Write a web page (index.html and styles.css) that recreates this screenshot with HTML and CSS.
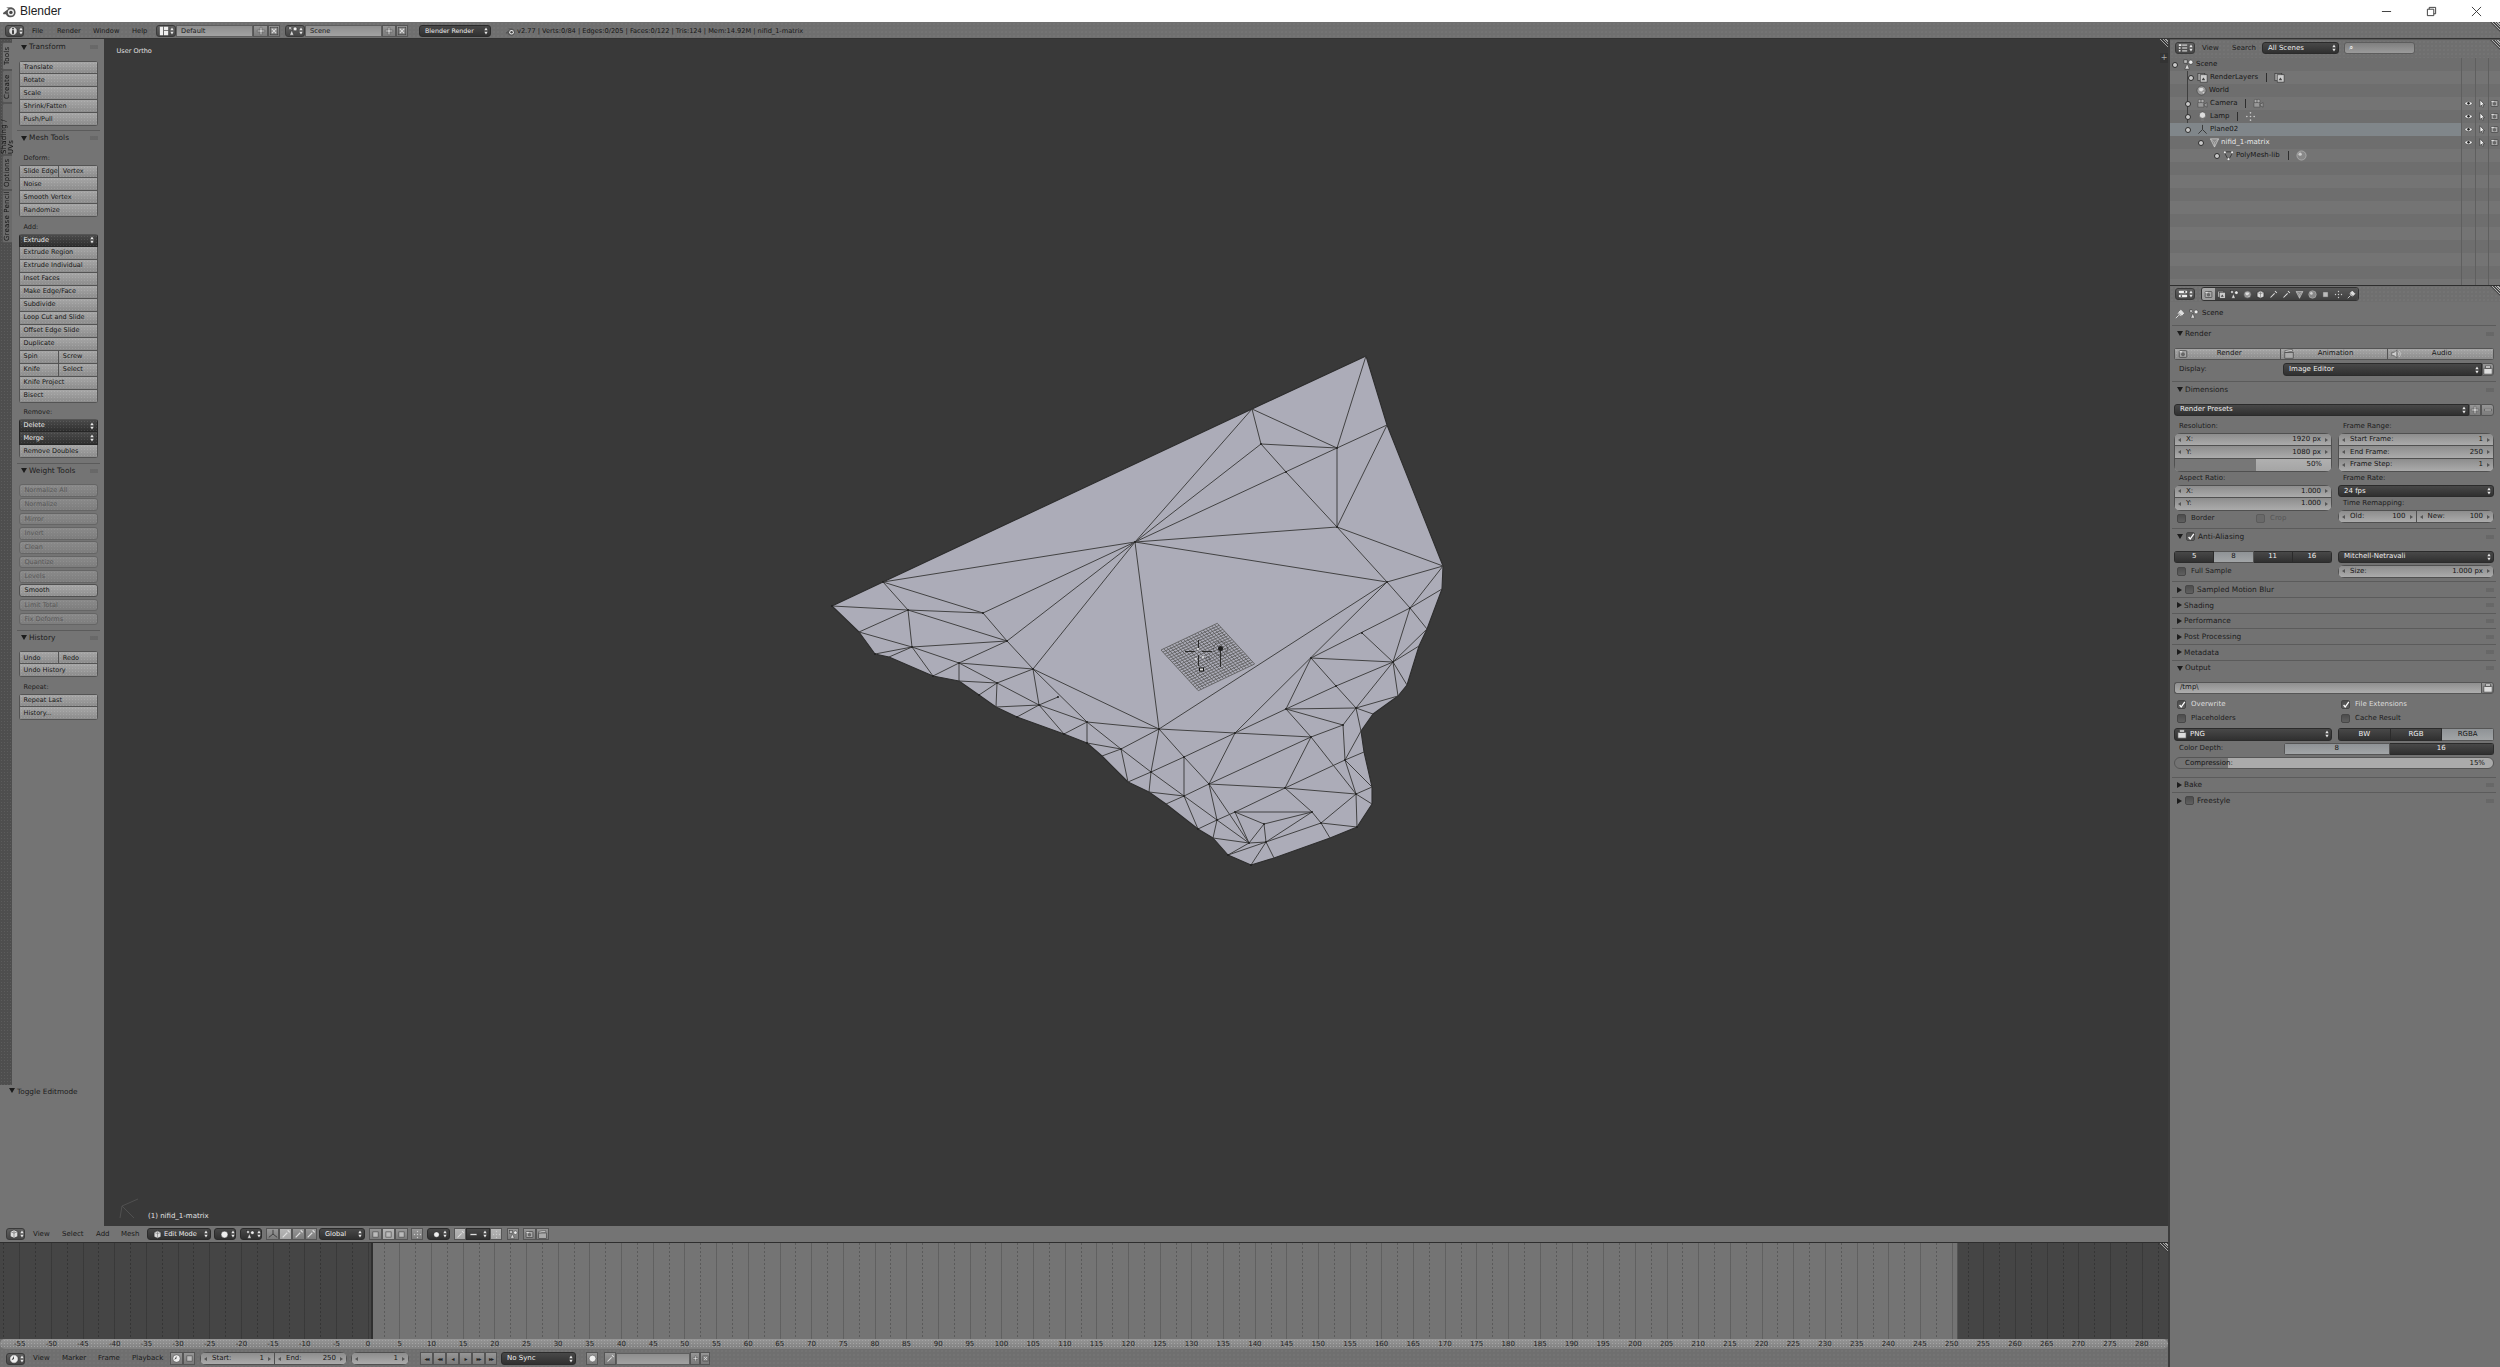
FILE: index.html
```html
<!DOCTYPE html>
<html lang="en">
<head>
<meta charset="utf-8">
<title>Blender</title>
<link rel="stylesheet" href="styles.css">
</head>
<body>
<svg class="defs" width="0" height="0">
  <symbol id="ud" viewBox="0 0 5 10"><path d="M2.5 0.5 4.6 4H.4zM2.5 9.5 .4 6h4.2z"/></symbol>
  <symbol id="logo" viewBox="0 0 16 16"><path d="M1 9.5 7 5 4.5 3.7 10 3.5c3 .6 4.8 3 4.5 6-.4 3-3 5-6 4.7-2.300-.2-3.800-1.600-4.300-3.200L1.500 11z" fill="#555"/><circle cx="9.500" cy="9" r="3.300" fill="#eee"/><circle cx="9.500" cy="9" r="1.800" fill="#444"/></symbol>
  <symbol id="cube" viewBox="0 0 12 12"><path d="M6 1 10.500 3v6L6 11 1.500 9V3z" fill="#ddd" stroke="#222" stroke-width=".7"/><path d="M6 1v10" stroke="#888" fill="none"/><path d="M1.500 3 6 5l4.500-2" stroke="#555" fill="none" stroke-width=".6"/></symbol>
  <symbol id="info" viewBox="0 0 12 12"><circle cx="6" cy="6" r="5" fill="#ddd" stroke="#222" stroke-width=".7"/><rect x="5" y="5" width="2" height="4.500" fill="#222"/><rect x="5" y="2.500" width="2" height="1.500" fill="#222"/></symbol>
  <symbol id="layout" viewBox="0 0 12 12"><path d="M1 1h4v10H1zM6 1h5v4H6zM6 6h5v5H6z" fill="#eee"/></symbol>
  <symbol id="scene" viewBox="0 0 12 12"><path d="M2 11 4.500 5 7 11z" fill="#ddd" stroke="#222" stroke-width=".5"/><circle cx="8.500" cy="3.500" r="2.300" fill="#eee" stroke="#222" stroke-width=".5"/><rect x="1" y="1" width="3.500" height="3.500" fill="#bbb" stroke="#222" stroke-width=".5"/></symbol>
  <symbol id="list" viewBox="0 0 12 12"><path d="M1 1.500h3v2H1zM1 5h2v1.800H1zM1 8.500h2v1.800H1z" fill="#eee"/><path d="M5 2.500h6M5 6h6M5 9.500h6" stroke="#eee" stroke-width="1.200"/></symbol>
  <symbol id="props" viewBox="0 0 12 12"><rect x="1" y="2" width="10" height="3" rx="1" fill="#eee"/><rect x="1" y="7" width="10" height="3" rx="1" fill="#eee"/><circle cx="8" cy="3.500" r="1" fill="#333"/><circle cx="4" cy="8.500" r="1" fill="#333"/></symbol>
  <symbol id="clock" viewBox="0 0 12 12"><circle cx="6" cy="6" r="5" fill="#eee" stroke="#222" stroke-width=".6"/><path d="M6 2.500V6L3 7.500z" fill="#444"/></symbol>
  <symbol id="eye" viewBox="0 0 12 12"><path d="M1 6c2.500-3.500 7.500-3.500 10 0-2.500 3.500-7.500 3.500-10 0z" fill="#eee" stroke="#333" stroke-width=".6"/><circle cx="6" cy="5.800" r="1.700" fill="#222"/></symbol>
  <symbol id="cur" viewBox="0 0 12 12"><path d="M4 1v9l2-2 1.500 3 1.300-.7L7.500 7.500H10z" fill="#eee" stroke="#222" stroke-width=".7"/></symbol>
  <symbol id="cam" viewBox="0 0 12 12"><rect x="1.500" y="2" width="9" height="8" rx="1" fill="#aaa" stroke="#333" stroke-width=".8"/><circle cx="6" cy="6.300" r="2.300" fill="#666"/><rect x="2" y="2.500" width="3" height="1.500" fill="#ddd"/></symbol>
  <symbol id="world" viewBox="0 0 12 12"><circle cx="6" cy="6" r="5" fill="#999" stroke="#444" stroke-width=".7"/><path d="M3 4c2-1.500 3 0 4-1l1.500 2L6 7 4 6.500zM7 8l2-.5-1 2z" fill="#ddd"/></symbol>
  <symbol id="rl" viewBox="0 0 12 12"><rect x="1" y="1.500" width="7.500" height="8" fill="#aaa" stroke="#333" stroke-width=".7"/><rect x="3.500" y="3" width="7.500" height="8" fill="#ccc" stroke="#333" stroke-width=".7"/><path d="M5 9l2-3 2 3z" fill="#444"/></symbol>
  <symbol id="camo" viewBox="0 0 12 12"><path d="M1 5h6.500v5H1zM7.500 7 11 5v5L7.500 8z" fill="#999" stroke="#444" stroke-width=".6"/><circle cx="3" cy="3.300" r="1.800" fill="#aaa" stroke="#444" stroke-width=".5"/><circle cx="6" cy="3.300" r="1.800" fill="#aaa" stroke="#444" stroke-width=".5"/></symbol>
  <symbol id="lamp" viewBox="0 0 12 12"><circle cx="6" cy="4.500" r="3.500" fill="#ddd" stroke="#444" stroke-width=".6"/><path d="M4.500 8h3v3h-3z" fill="#777"/></symbol>
  <symbol id="empty" viewBox="0 0 12 12"><path d="M6 6V1M6 6 1.500 10.500M6 6l4.500 4.500" stroke="#333" stroke-width="1" fill="none"/></symbol>
  <symbol id="tri" viewBox="0 0 12 12"><path d="M1.500 2h9L6 11z" fill="#8a8a8a" stroke="#ddd" stroke-width=".7"/><path d="M1.500 2 6 6l4.500-4M6 6v5" stroke="#ccc" stroke-width=".5" fill="none"/></symbol>
  <symbol id="poly" viewBox="0 0 12 12"><path d="M1 2h10L6 11z" fill="#777" stroke="#222" stroke-width=".7"/><circle cx="2" cy="2.500" r="1.200" fill="#eee"/><circle cx="10" cy="2.500" r="1.200" fill="#eee"/><circle cx="6" cy="10" r="1.200" fill="#eee"/></symbol>
  <symbol id="ball" viewBox="0 0 12 12"><circle cx="6" cy="6" r="5" fill="#888" stroke="#bbb" stroke-width=".7"/><circle cx="4.500" cy="4.500" r="1.800" fill="#ccc"/></symbol>
  <symbol id="dots" viewBox="0 0 12 12"><g fill="#ccc"><circle cx="6" cy="2" r=".9"/><circle cx="2" cy="6" r=".9"/><circle cx="10" cy="6" r=".9"/><circle cx="6" cy="10" r=".9"/><circle cx="6" cy="6" r=".9"/></g></symbol>
  <symbol id="pin" viewBox="0 0 12 12"><path d="M1 11 4.500 7.500M3.500 5 7 8.500M4.500 4 8 7.500 10.500 5 7 1.500z" stroke="#eee" fill="#ddd" stroke-width="1"/></symbol>
  <symbol id="folder" viewBox="0 0 12 12"><path d="M1 4h10v7H1zM3 1h6v3H3z" fill="#ddd" stroke="#333" stroke-width=".7"/></symbol>
  <symbol id="plus" viewBox="0 0 12 12"><path d="M5 1.500h2V5h3.500v2H7v3.500H5V7H1.500V5H5z" fill="#ddd" stroke="#444" stroke-width=".6"/></symbol>
  <symbol id="minus" viewBox="0 0 12 12"><rect x="1.500" y="5" width="9" height="2" fill="#ddd" stroke="#444" stroke-width=".6"/></symbol>
  <symbol id="x" viewBox="0 0 12 12"><rect x="1.500" y="1.500" width="9" height="9" fill="none" stroke="#444" stroke-width=".8"/><path d="M3.500 3.500l5 5M8.500 3.500l-5 5" stroke="#ddd" stroke-width="1.300"/></symbol>
  <symbol id="check" viewBox="0 0 10 10"><path d="M2 5l2 2.500L8.500 1" stroke="#fff" stroke-width="1.600" fill="none"/></symbol>
  <symbol id="anim" viewBox="0 0 12 12"><rect x="1" y="4" width="10" height="7" fill="#aaa" stroke="#333" stroke-width=".7"/><path d="M1 2l9-1.500.4 2-9 1.500z" fill="#ddd" stroke="#333" stroke-width=".6"/></symbol>
  <symbol id="audio" viewBox="0 0 12 12"><path d="M1 4h3l3-3v10L4 8H1z" fill="#ccc" stroke="#333" stroke-width=".6"/><path d="M8.500 4c1 1.300 1 2.700 0 4M10 2.500c1.600 2.300 1.600 4.700 0 7" stroke="#ddd" fill="none" stroke-width=".8"/></symbol>
  <symbol id="sq" viewBox="0 0 12 12"><rect x="2.500" y="2.500" width="7" height="7" fill="#bbb" stroke="#444" stroke-width=".8"/></symbol>
  <symbol id="sph" viewBox="0 0 12 12"><circle cx="6" cy="6" r="4.500" fill="#eee" stroke="#222" stroke-width=".5"/></symbol>
  <symbol id="tool" viewBox="0 0 12 12"><path d="M2 10 7.500 4.500M8 1.500 10.500 4" stroke="#ddd" stroke-width="1.400" fill="none"/></symbol>
  <symbol id="vert" viewBox="0 0 12 12"><path d="M6 6V1M6 6 1 10M6 6l5 4" stroke="#333" stroke-width="1" fill="none"/></symbol>
</svg>

<header class="titlebar">
  <svg class="tlogo"><use href="#logo"/></svg>
  <span class="ttext">Blender</span>
  <div class="winctl">
    <svg class="wc" viewBox="0 0 12 12"><path d="M1 6h10" stroke="#333"/></svg>
    <svg class="wc" viewBox="0 0 12 12"><path d="M1.500 3.500h7v7h-7zM3.500 3.500v-2h7v7h-2" fill="none" stroke="#333"/></svg>
    <svg class="wc" viewBox="0 0 12 12"><path d="M1 1l10 10M11 1 1 11" stroke="#333"/></svg>
  </div>
</header>

<div class="hdr infobar">
  <div class="hb w19 ml5"><svg class="i10"><use href="#info"/></svg><svg class="ud"><use href="#ud"/></svg></div>
  <span class="menu w25 ml8">File</span><span class="menu w36">Render</span><span class="menu w39">Window</span><span class="menu w24">Help</span>
  <div class="hb w20"><svg class="i10"><use href="#layout"/></svg><svg class="ud"><use href="#ud"/></svg></div>
  <div class="text-field w77">Default</div>
  <div class="tb w15"><svg class="i10"><use href="#plus"/></svg></div><div class="tb w12"><svg class="i10"><use href="#x"/></svg></div>
  <div class="hb w20 ml5"><svg class="i10"><use href="#scene"/></svg><svg class="ud"><use href="#ud"/></svg></div>
  <div class="text-field w77">Scene</div>
  <div class="tb w14"><svg class="i10"><use href="#plus"/></svg></div><div class="tb w12"><svg class="i10"><use href="#x"/></svg></div>
  <div class="dd w72 ml11">Blender Render<svg class="ud"><use href="#ud"/></svg></div>
  <svg class="i11 ml14"><use href="#logo"/></svg>
  <span class="stats">v2.77 | Verts:0/84 | Edges:0/205 | Faces:0/122 | Tris:124 | Mem:14.92M | nifid_1-matrix</span>
  <i class="corner corner-tr"></i>
</div>

<div class="workspace">
  <div class="leftcol">
    <div class="viewarea">
      <aside class="toolregion">
        <div class="toolupper">
          <nav class="tabs">
            <span class="tab tab-on tab-tools">Tools</span>
            <span class="tab tab-create">Create</span>
            <span class="tab tab-shade">Shading / UVs</span>
            <span class="tab tab-opt">Options</span>
            <span class="tab tab-gp">Grease Pencil</span>
          </nav>
          <div class="shelf">
            <section class="tpanel tp1">
              <div class="phead"><i class="tdown"></i>Transform<i class="grip"></i></div>
              <div class="grp">
                <div class="btn">Translate</div><div class="btn">Rotate</div><div class="btn">Scale</div><div class="btn">Shrink/Fatten</div><div class="btn">Push/Pull</div>
              </div>
            </section>
            <section class="tpanel tp2">
              <div class="phead"><i class="tdown"></i>Mesh Tools<i class="grip"></i></div>
              <div class="lbl">Deform:</div>
              <div class="grp">
                <div class="hsplit"><div class="btn">Slide Edge</div><div class="btn">Vertex</div></div>
                <div class="btn">Noise</div><div class="btn">Smooth Vertex</div><div class="btn">Randomize</div>
              </div>
              <div class="lbl lbl-sp">Add:</div>
              <div class="grp">
                <div class="btn dark">Extrude<svg class="ud"><use href="#ud"/></svg></div>
                <div class="btn">Extrude Region</div><div class="btn">Extrude Individual</div><div class="btn">Inset Faces</div><div class="btn">Make Edge/Face</div><div class="btn">Subdivide</div><div class="btn">Loop Cut and Slide</div><div class="btn">Offset Edge Slide</div><div class="btn">Duplicate</div>
                <div class="hsplit"><div class="btn">Spin</div><div class="btn">Screw</div></div>
                <div class="hsplit"><div class="btn">Knife</div><div class="btn">Select</div></div>
                <div class="btn">Knife Project</div><div class="btn">Bisect</div>
              </div>
              <div class="lbl lbl-sp">Remove:</div>
              <div class="grp">
                <div class="btn dark">Delete<svg class="ud"><use href="#ud"/></svg></div>
                <div class="btn dark">Merge<svg class="ud"><use href="#ud"/></svg></div>
                <div class="btn">Remove Doubles</div>
              </div>
            </section>
            <section class="tpanel tp3">
              <div class="phead"><i class="tdown"></i>Weight Tools<i class="grip"></i></div>
              <div class="weights">
                <div class="wbtn off">Normalize All</div><div class="wbtn off">Normalize</div><div class="wbtn off">Mirror</div><div class="wbtn off">Invert</div><div class="wbtn off">Clean</div><div class="wbtn off">Quantize</div><div class="wbtn off">Levels</div><div class="wbtn">Smooth</div><div class="wbtn off">Limit Total</div><div class="wbtn off">Fix Deforms</div>
              </div>
            </section>
            <section class="tpanel tp4">
              <div class="phead"><i class="tdown"></i>History<i class="grip"></i></div>
              <div class="grp">
                <div class="hsplit"><div class="btn">Undo</div><div class="btn">Redo</div></div>
                <div class="btn">Undo History</div>
              </div>
              <div class="lbl lbl-sp">Repeat:</div>
              <div class="grp">
                <div class="btn">Repeat Last</div><div class="btn">History...</div>
              </div>
            </section>
          </div>
        </div>
        <div class="oppanel"><i class="tdown"></i>Toggle Editmode</div>
      </aside>
      <main class="viewport">
        <span class="vp-top">User Ortho</span>
        <span class="vp-bottom">(1) nifid_1-matrix</span>
        <span class="vp-plus">+</span>
        <svg class="meshcanvas" viewBox="104 39 2064 1187" aria-hidden="true">
          <path class="axes" d="M120 1218 122 1206 138 1199M122 1206 134 1218"/>
          <path class="face" d="M1366 356 1387 425 1443 566 1442 589 1427 629 1419 646 1407 685 1398 696 1373 714 1361 731 1364 752 1372 787 1372 804 1357 827 1330 838 1274 858 1251 865 1228 855 1213 838 1198 829 1166 804 1149 792 1128 782 1102 756 1087 743 1064 734 1017 717 996 707 979 695 959 681 933 676 889 657 875 654 859 632 832 606 883 582 1252 409z"/>
          <path class="grid" d="M1161 650l37.3 40.7m2.815-1.335l-37.3-40.7m2.815-1.335l37.3 40.7m2.815-1.335l-37.3-40.7m2.815-1.335l37.3 40.7m2.815-1.335l-37.3-40.7m2.815-1.335l37.3 40.7m2.815-1.335l-37.3-40.7m2.815-1.335l37.3 40.7m2.815-1.335l-37.3-40.7m2.815-1.335l37.3 40.7m2.815-1.335l-37.3-40.7m2.815-1.335l37.3 40.7m2.815-1.335l-37.3-40.7m2.815-1.335l37.3 40.7m2.815-1.335l-37.3-40.7m2.815-1.335l37.3 40.7m2.815-1.335l-37.3-40.7m2.815-1.335l37.3 40.7m2.815-1.335l-37.3-40.7m2.815-1.335l37.3 40.7M1161 650l56.3-26.7m1.865 2.035l-56.3 26.7m1.865 2.035l56.3-26.7m1.865 2.035l-56.3 26.7m1.865 2.035l56.3-26.7m1.865 2.035l-56.3 26.7m1.865 2.035l56.3-26.7m1.865 2.035l-56.3 26.7m1.865 2.035l56.3-26.7m1.865 2.035l-56.3 26.7m1.865 2.035l56.3-26.7m1.865 2.035l-56.3 26.7m1.865 2.035l56.3-26.7m1.865 2.035l-56.3 26.7m1.865 2.035l56.3-26.7m1.865 2.035l-56.3 26.7m1.865 2.035l56.3-26.7m1.865 2.035l-56.3 26.7m1.865 2.035l56.3-26.7m1.865 2.035l-56.3 26.7m1.865 2.035l56.3-26.7"/>
          <path class="edges" d="M1366 356 1337 448M1387 425 1337 448M1387 425 1337 527M1337 448 1337 527M1252 409 1337 448M1252 409 1261 444M1261 444 1337 448M1261 444 1286 472 1337 527M1337 448 1135 542M1261 444 1135 542M1252 409 1135 542M1337 527 1135 542M1337 527 1443 566M1337 527 1387 582M1135 542 1387 582M1387 582 1443 566M1387 582 1410 608M1410 608 1443 566M1410 608 1442 589M1410 608 1427 629M1410 608 1393 662
          M883 582 1135 542M883 582 983 613M883 582 908 610M832 606 908 610M908 610 983 613M983 613 1135 542M983 613 1007 641M1007 641 1135 542M1007 641 1033 669M1033 669 1135 542M908 610 1007 641M908 610 912 647M908 610 859 632M859 632 912 647M875 654 912 647M889 657 912 647M912 647 1007 641M912 647 933 676M912 647 959 663M959 663 1007 641M959 663 1033 669M959 663 933 676M959 663 959 681M959 663 1039 705M997 683 1033 669M997 683 959 681M997 683 996 707M997 683 979 695M996 707 1039 705M1039 705 1017 717M1039 705 1058 697M1039 705 1033 669M1039 705 1064 734M1039 705 1087 722M1033 669 1087 722M1033 669 1159 729M1064 734 1087 722M1087 722 1087 743M1087 722 1159 729M1087 722 1121 749M1087 743 1121 749M1121 749 1102 756M1121 749 1159 729M1121 749 1128 782M1121 749 1151 772M1135 542 1159 729
          M1387 582 1159 729M1387 582 1235 733M1159 729 1235 733 1311 737M1159 729 1184 757 1209 784M1184 757 1184 796M1159 729 1151 772 1149 792 1184 796 1151 772M1151 772 1128 782M1184 796 1209 784M1184 796 1198 829M1184 796 1166 804M1151 772 1184 757 1235 733 1286 709 1336 686 1393 662M1286 709 1311 658M1286 709 1311 737M1286 709 1356 708M1286 709 1343 725M1311 658 1410 608M1311 658 1393 662M1311 658 1336 686 1356 708M1362 633 1393 662M1393 662 1356 708M1393 662 1398 696M1393 662 1407 685M1393 662 1419 646M1393 662 1427 629M1356 708 1398 696M1356 708 1373 714M1356 708 1361 731M1356 708 1343 725M1343 725 1311 737M1343 725 1345 760M1361 731 1345 760M1345 760 1364 752M1311 737 1356 794M1345 760 1356 794M1345 760 1372 787M1372 787 1356 794M1356 794 1372 804M1356 794 1357 827M1356 794 1285 788M1321 823 1356 794M1311 737 1285 788M1209 784 1311 737M1209 784 1285 788M1235 733 1209 784M1285 788 1345 760M1285 788 1235 812M1285 788 1312 812M1235 812 1312 812M1209 784 1217 820M1209 784 1249 843M1184 796 1217 820M1217 820 1198 829M1217 820 1213 838M1217 820 1235 812M1217 820 1249 843M1235 812 1249 843M1235 812 1264 824M1264 824 1312 812M1264 824 1249 843M1264 824 1266 842M1266 842 1249 843M1266 842 1312 812M1266 842 1321 823M1249 843 1213 838M1249 843 1228 855M1266 842 1228 855M1266 842 1251 865M1266 842 1274 858M1321 823 1330 838M1321 823 1357 827M1312 812 1321 823"/>
          <path class="vdots" d="M1337 448h0M1261 444h0M1286 472h0M1337 527h0M1135 542h0M1387 582h0M1410 608h0M908 610h0M983 613h0M1007 641h0M1033 669h0M912 647h0M959 663h0M997 683h0M1039 705h0M1058 697h0M1087 722h0M1121 749h0M1159 729h0M1235 733h0M1311 737h0M1343 725h0M1356 708h0M1286 709h0M1311 658h0M1393 662h0M1336 686h0M1151 772h0M1184 757h0M1184 796h0M1209 784h0M1285 788h0M1345 760h0M1356 794h0M1235 812h0M1312 812h0M1217 820h0M1264 824h0M1321 823h0M1249 843h0M1266 842h0M1362 633h0M832 606h0M883 582h0M875 654h0M933 676h0M979 695h0M1017 717h0M1064 734h0M1087 743h0M1228 855h0M1251 865h0M1357 827h0M1198 829h0"/>
          <path class="cursor" d="M1185 651.500h10M1202 651.500h10M1198.500 640v8M1198.500 655v11M1220.500 650v17"/>
          <circle class="lampdot" cx="1220.500" cy="648.500" r="2.500"/>
          <circle class="lampring" cx="1220.500" cy="648.500" r="7"/>
          <circle class="wdot" cx="1198" cy="649" r=".9"/><circle class="wdot" cx="1196" cy="659" r=".9"/><circle class="wdot" cx="1203" cy="657" r=".9"/>
          <circle class="lampring" cx="1208" cy="659" r="2"/>
          <rect class="camdot" x="1199.500" y="668" width="4" height="3"/>
        </svg>
        <i class="corner corner-tr"></i>
      </main>
    </div>

    <div class="hdr h3d">
      <div class="hb w19 ml6"><svg class="i10"><use href="#cube"/></svg><svg class="ud"><use href="#ud"/></svg></div>
      <span class="menu w29 ml8">View</span><span class="menu w34">Select</span><span class="menu w25">Add</span><span class="menu w26">Mesh</span>
      <div class="dd w64"><svg class="i9"><use href="#cube"/></svg>Edit Mode<svg class="ud"><use href="#ud"/></svg></div>
      <div class="dd w22 ml3"><svg class="i9"><use href="#sph"/></svg><svg class="ud"><use href="#ud"/></svg></div>
      <div class="dd w22 ml4"><svg class="i9"><use href="#scene"/></svg><svg class="ud"><use href="#ud"/></svg></div>
      <div class="tb w13 ml4"><svg class="i10"><use href="#vert"/></svg></div><div class="tb lit w13"><svg class="i10"><use href="#tool"/></svg></div><div class="tb w13"><svg class="i10"><use href="#tool"/></svg></div><div class="tb w12"><svg class="i10"><use href="#tool"/></svg></div>
      <div class="dd w46 ml2">Global<svg class="ud"><use href="#ud"/></svg></div>
      <div class="tb w13 ml4"><svg class="i9"><use href="#sq"/></svg></div><div class="tb lit w13"><svg class="i9"><use href="#sq"/></svg></div><div class="tb w13"><svg class="i9"><use href="#sq"/></svg></div>
      <div class="tb w12 ml3"><svg class="i9"><use href="#dots"/></svg></div>
      <div class="dd w23 ml4"><svg class="i7"><use href="#sph"/></svg><svg class="ud"><use href="#ud"/></svg></div>
      <div class="tb lit w12 ml4"><svg class="i9"><use href="#tool"/></svg></div><div class="dd sq w24"><svg class="i9"><use href="#minus"/></svg><svg class="ud"><use href="#ud"/></svg></div><div class="tb lit w12"><svg class="i9"><use href="#dots"/></svg></div>
      <div class="tb w12 ml5"><svg class="i9"><use href="#scene"/></svg></div>
      <div class="tb w13 ml4"><svg class="i9"><use href="#cam"/></svg></div><div class="tb w13"><svg class="i9"><use href="#anim"/></svg></div>
    </div>

    <div class="timeline"><i class="corner corner-tr"></i></div>
    <div class="ruler">
      <span>-55</span><span>-50</span><span>-45</span><span>-40</span><span>-35</span><span>-30</span><span>-25</span><span>-20</span><span>-15</span><span>-10</span><span>-5</span><span>0</span><span>5</span><span>10</span><span>15</span><span>20</span><span>25</span><span>30</span><span>35</span><span>40</span><span>45</span><span>50</span><span>55</span><span>60</span><span>65</span><span>70</span><span>75</span><span>80</span><span>85</span><span>90</span><span>95</span><span>100</span><span>105</span><span>110</span><span>115</span><span>120</span><span>125</span><span>130</span><span>135</span><span>140</span><span>145</span><span>150</span><span>155</span><span>160</span><span>165</span><span>170</span><span>175</span><span>180</span><span>185</span><span>190</span><span>195</span><span>200</span><span>205</span><span>210</span><span>215</span><span>220</span><span>225</span><span>230</span><span>235</span><span>240</span><span>245</span><span>250</span><span>255</span><span>260</span><span>265</span><span>270</span><span>275</span><span>280</span>
    </div>
    <div class="hdr htl">
      <div class="hb w19 ml6"><svg class="i10"><use href="#clock"/></svg><svg class="ud"><use href="#ud"/></svg></div>
      <span class="menu w29 ml8">View</span><span class="menu w36">Marker</span><span class="menu w34">Frame</span><span class="menu w38">Playback</span>
      <div class="tb w13"><svg class="i9"><use href="#clock"/></svg></div><div class="tb w12"><svg class="i9"><use href="#sq"/></svg></div>
      <div class="nums ml5 w147">
        <div class="num w75"><i class="la"></i><span>Start:</span><b>1</b><i class="ra"></i></div>
        <div class="num w72"><i class="la"></i><span>End:</span><b>250</b><i class="ra"></i></div>
      </div>
      <div class="nums ml4 w58"><div class="num w58"><i class="la"></i><b>1</b><i class="ra"></i></div></div>
      <div class="tb w13 ml11">◂◂</div><div class="tb w13">◂◂</div><div class="tb w13">◂</div><div class="tb w13">▸</div><div class="tb w13">▸▸</div><div class="tb w12">▸▸</div>
      <div class="dd w75 ml4">No Sync<svg class="ud"><use href="#ud"/></svg></div>
      <div class="tb w12 ml10"><svg class="i9"><use href="#sph"/></svg></div>
      <div class="tb w12 ml6"><svg class="i9"><use href="#tool"/></svg></div>
      <div class="text-field w74"></div>
      <div class="tb w10"><svg class="i7"><use href="#plus"/></svg></div><div class="tb w10"><svg class="i7"><use href="#x"/></svg></div>
    </div>
  </div>

  <div class="rightcol">
    <section class="outliner">
      <div class="hdr holin">
        <div class="hb w20 ml5"><svg class="i10"><use href="#list"/></svg><svg class="ud"><use href="#ud"/></svg></div>
        <span class="menu w30 ml7">View</span><span class="menu w30">Search</span>
        <div class="dd w77">All Scenes<svg class="ud"><use href="#ud"/></svg></div>
        <div class="searchbox ml5">&#8981;</div>
        <i class="corner corner-tr"></i>
      </div>
      <div class="olbody">
        <div class="oltree">
          <i class="oline"></i>
          <div class="olrow d0"><i class="exp"></i><svg class="i11"><use href="#scene"/></svg><span class="oln">Scene</span></div>
          <div class="olrow d1b"><i class="exp"></i><svg class="i11"><use href="#rl"/></svg><span class="oln">RenderLayers</span><i class="pipe"></i><svg class="i11"><use href="#rl"/></svg></div>
          <div class="olrow d1c"><svg class="i11"><use href="#world"/></svg><span class="oln">World</span></div>
          <div class="olrow d1"><i class="exp"></i><svg class="i11"><use href="#camo"/></svg><span class="oln">Camera</span><i class="pipe"></i><svg class="i11"><use href="#camo"/></svg></div>
          <div class="olrow d1"><i class="exp"></i><svg class="i11"><use href="#lamp"/></svg><span class="oln">Lamp</span><i class="pipe"></i><svg class="i11"><use href="#dots"/></svg></div>
          <div class="olrow d1 sel"><i class="exp"></i><svg class="i11"><use href="#empty"/></svg><span class="oln">Plane02</span></div>
          <div class="olrow d2"><i class="exp"></i><svg class="i11"><use href="#tri"/></svg><span class="oln act">nifid_1-matrix</span></div>
          <div class="olrow d3"><i class="exp"></i><svg class="i11"><use href="#poly"/></svg><span class="oln">PolyMesh-lib</span><i class="pipe"></i><svg class="i11"><use href="#ball"/></svg></div>
        </div>
        <div class="olrestrict">
          <div class="rr"></div><div class="rr"></div><div class="rr"></div>
          <div class="rr"><svg class="i9"><use href="#eye"/></svg><svg class="i9"><use href="#cur"/></svg><svg class="i9"><use href="#cam"/></svg></div>
          <div class="rr"><svg class="i9"><use href="#eye"/></svg><svg class="i9"><use href="#cur"/></svg><svg class="i9"><use href="#cam"/></svg></div>
          <div class="rr"><svg class="i9"><use href="#eye"/></svg><svg class="i9"><use href="#cur"/></svg><svg class="i9"><use href="#cam"/></svg></div>
          <div class="rr"><svg class="i9"><use href="#eye"/></svg><svg class="i9"><use href="#cur"/></svg><svg class="i9"><use href="#cam"/></svg></div>
        </div>
      </div>
    </section>

    <section class="properties">
      <div class="hdr hprops">
        <div class="hb w20 ml5"><svg class="i10"><use href="#props"/></svg><svg class="ud"><use href="#ud"/></svg></div>
        <div class="ptabs">
          <i class="ptab on"><svg class="i9"><use href="#cam"/></svg></i><i class="ptab"><svg class="i9"><use href="#rl"/></svg></i><i class="ptab"><svg class="i9"><use href="#scene"/></svg></i><i class="ptab"><svg class="i9"><use href="#world"/></svg></i><i class="ptab"><svg class="i9"><use href="#cube"/></svg></i><i class="ptab"><svg class="i9"><use href="#tool"/></svg></i><i class="ptab"><svg class="i9"><use href="#tool"/></svg></i><i class="ptab"><svg class="i9"><use href="#tri"/></svg></i><i class="ptab"><svg class="i9"><use href="#ball"/></svg></i><i class="ptab"><svg class="i9"><use href="#sq"/></svg></i><i class="ptab"><svg class="i9"><use href="#dots"/></svg></i><i class="ptab"><svg class="i9"><use href="#pin"/></svg></i>
        </div>
        <i class="corner corner-tr"></i>
      </div>
      <div class="pbody">
        <div class="context"><svg class="i10"><use href="#pin"/></svg><svg class="i10"><use href="#scene"/></svg><span>Scene</span></div>

        <section class="ppanel p-render">
          <div class="pphead"><i class="tdown"></i>Render<i class="grip"></i></div>
          <div class="hsplit rowrender">
            <div class="btn bimg"><svg class="i10"><use href="#cam"/></svg><span>Render</span></div>
            <div class="btn bimg"><svg class="i10"><use href="#anim"/></svg><span>Animation</span></div>
            <div class="btn bimg"><svg class="i10"><use href="#audio"/></svg><span>Audio</span></div>
          </div>
          <div class="rowdisplay">
            <span class="plabel">Display:</span>
            <div class="dd ddgrow">Image Editor<svg class="ud"><use href="#ud"/></svg></div>
            <div class="tb w12 endr"><svg class="i10"><use href="#folder"/></svg></div>
          </div>
        </section>

        <section class="ppanel p-dim">
          <div class="pphead"><i class="tdown"></i>Dimensions<i class="grip"></i></div>
          <div class="rowpresets">
            <div class="dd ddgrow">Render Presets<svg class="ud"><use href="#ud"/></svg></div>
            <div class="tb w12"><svg class="i10"><use href="#plus"/></svg></div><div class="tb w13 endr"><svg class="i10"><use href="#minus"/></svg></div>
          </div>
          <div class="cols">
            <div class="col">
              <div class="plabel h13">Resolution:</div>
              <div class="nums col3">
                <div class="num"><i class="la"></i><span>X:</span><b>1920 px</b><i class="ra"></i></div>
                <div class="num"><i class="la"></i><span>Y:</span><b>1080 px</b><i class="ra"></i></div>
                <div class="num slider s50"><b>50%</b></div>
              </div>
              <div class="plabel h13">Aspect Ratio:</div>
              <div class="nums col3">
                <div class="num"><i class="la"></i><span>X:</span><b>1.000</b><i class="ra"></i></div>
                <div class="num"><i class="la"></i><span>Y:</span><b>1.000</b><i class="ra"></i></div>
              </div>
              <div class="checks2 borderrow">
                <label class="chk"><i class="cb"></i>Border</label>
                <label class="chk dim"><i class="cb"></i>Crop</label>
              </div>
            </div>
            <div class="col">
              <div class="plabel h13">Frame Range:</div>
              <div class="nums col3">
                <div class="num"><i class="la"></i><span>Start Frame:</span><b>1</b><i class="ra"></i></div>
                <div class="num"><i class="la"></i><span>End Frame:</span><b>250</b><i class="ra"></i></div>
                <div class="num"><i class="la"></i><span>Frame Step:</span><b>1</b><i class="ra"></i></div>
              </div>
              <div class="plabel h13">Frame Rate:</div>
              <div class="dd full">24 fps<svg class="ud"><use href="#ud"/></svg></div>
              <div class="plabel h13">Time Remapping:</div>
              <div class="nums oldnew">
                <div class="num"><i class="la"></i><span>Old:</span><b>100</b><i class="ra"></i></div>
                <div class="num"><i class="la"></i><span>New:</span><b>100</b><i class="ra"></i></div>
              </div>
            </div>
          </div>
        </section>

        <section class="ppanel p-aa">
          <div class="pphead"><i class="tdown"></i><i class="cb on hcb"><svg class="i8"><use href="#check"/></svg></i>Anti-Aliasing<i class="grip"></i></div>
          <div class="cols">
            <div class="col">
              <div class="segs"><div class="seg">5</div><div class="seg lit">8</div><div class="seg">11</div><div class="seg">16</div></div>
              <label class="chk chk-fs"><i class="cb"></i>Full Sample</label>
            </div>
            <div class="col">
              <div class="dd full">Mitchell-Netravali<svg class="ud"><use href="#ud"/></svg></div>
              <div class="nums sizef"><div class="num"><i class="la"></i><span>Size:</span><b>1.000 px</b><i class="ra"></i></div></div>
            </div>
          </div>
        </section>

        <section class="ppanel closed"><div class="pphead"><i class="tright"></i><i class="cb hcb"></i>Sampled Motion Blur<i class="grip"></i></div></section>
        <section class="ppanel closed"><div class="pphead"><i class="tright"></i>Shading<i class="grip"></i></div></section>
        <section class="ppanel closed"><div class="pphead"><i class="tright"></i>Performance<i class="grip"></i></div></section>
        <section class="ppanel closed"><div class="pphead"><i class="tright"></i>Post Processing<i class="grip"></i></div></section>
        <section class="ppanel closed"><div class="pphead"><i class="tright"></i>Metadata<i class="grip"></i></div></section>

        <section class="ppanel p-output">
          <div class="pphead"><i class="tdown"></i>Output<i class="grip"></i></div>
          <div class="rowpath">
            <div class="pathfield">/tmp\</div>
            <div class="tb w13 endr"><svg class="i10"><use href="#folder"/></svg></div>
          </div>
          <div class="cols outchecks">
            <label class="chk lite"><i class="cb on"><svg class="i8"><use href="#check"/></svg></i>Overwrite</label>
            <label class="chk lite"><i class="cb on"><svg class="i8"><use href="#check"/></svg></i>File Extensions</label>
            <label class="chk"><i class="cb"></i>Placeholders</label>
            <label class="chk"><i class="cb"></i>Cache Result</label>
          </div>
          <div class="cols rowpng">
            <div class="dd full"><svg class="i10"><use href="#folder"/></svg>PNG<svg class="ud"><use href="#ud"/></svg></div>
            <div class="segs"><div class="seg">BW</div><div class="seg">RGB</div><div class="seg lit">RGBA</div></div>
          </div>
          <div class="rowdepth">
            <span class="plabel">Color Depth:</span>
            <div class="segs depth"><div class="seg lit">8</div><div class="seg">16</div></div>
          </div>
          <div class="compression"><span>Compression:</span><b>15%</b></div>
        </section>

        <section class="ppanel closed"><div class="pphead"><i class="tright"></i>Bake<i class="grip"></i></div></section>
        <section class="ppanel closed last"><div class="pphead"><i class="tright"></i><i class="cb hcb"></i>Freestyle<i class="grip"></i></div></section>
      </div>
    </section>
  </div>
</div>
</body>
</html>
```

FILE: styles.css
```css
* { box-sizing: border-box; }
html, body { margin: 0; padding: 0; }
body {
  width: 2500px; height: 1367px; overflow: hidden;
  display: flex; flex-direction: column;
  background: #727272; color: #141414;
  font: 7px/1 "DejaVu Sans", sans-serif;
}
i { font-style: normal; display: block; }
b { font-weight: normal; }
svg { display: block; flex: none; }
.defs { position: absolute; }
.i7 { width: 7px; height: 7px; } .i8 { width: 8px; height: 8px; } .i9 { width: 9px; height: 9px; }
.i10 { width: 10px; height: 10px; } .i11 { width: 11px; height: 11px; }
.ud { width: 4px; height: 8px; fill: #e6e6e6; flex: none; margin-left: auto; }

.w10{width:10px}.w12{width:12px}.w13{width:13px}.w14{width:14px}.w15{width:15px}.w19{width:19px}.w20{width:20px}.w22{width:22px}.w23{width:23px}.w24{width:24px}.w25{width:25px}.w26{width:26px}.w29{width:29px}.w30{width:30px}.w34{width:34px}.w36{width:36px}.w38{width:38px}.w39{width:39px}.w46{width:46px}.w58{width:58px}.w64{width:64px}.w72{width:72px}.w74{width:74px}.w75{width:75px}.w77{width:77px}.w147{width:147px}
.ml2{margin-left:2px}.ml3{margin-left:3px}.ml4{margin-left:4px}.ml5{margin-left:5px}.ml6{margin-left:6px}.ml7{margin-left:7px}.ml8{margin-left:8px}.ml10{margin-left:10px}.ml11{margin-left:11px}.ml14{margin-left:14px}

/* Window title */
.titlebar { height: 22px; flex: none; background: #fff; display: flex; align-items: center; padding-left: 2px; }
.tlogo { width: 15px; height: 15px; }
.ttext { margin-left: 3px; font: 12px "Liberation Sans", sans-serif; color: #222; }
.winctl { margin-left: auto; display: flex; gap: 34px; padding-right: 18px; }
.wc { width: 11px; height: 11px; }

/* Header bars */
.hdr {
  position: relative; height: 17px; flex: none;
  display: flex; align-items: center;
  background: #6f6f6f radial-gradient(#7d7d7d 0.5px, transparent 0.8px) 0 0 / 4px 4px;
}
.infobar { border-bottom: 1px solid #333; height: 17px; padding-top: 2px; font-size: 6.700px; }
.infobar .dd { font-size: 6.300px; }
.menu { color: #1a1a1a; flex: none; }
.hb {
  height: 12px; display: flex; align-items: center; gap: 1px; padding: 0 2px; flex: none;
  background: linear-gradient(#606060, #454545); border: 1px solid #3a3a3a; border-radius: 3px;
}
.dd {
  height: 12.500px; display: flex; align-items: center; gap: 2px; padding: 0 2px 0 5px; flex: none;
  background: linear-gradient(#484848, #303030); border: 1px solid #2b2b2b; border-radius: 3px; color: #eee; white-space: nowrap;
}
.dd.sq { border-radius: 0; padding-left: 2px; }
.dd.full { width: 100%; }
.ddgrow { flex: 1; border-radius: 3px 0 0 3px; }
.text-field {
  height: 12px; padding-left: 4px; display: flex; align-items: center; flex: none;
  background: linear-gradient(#8e8e8e, #a2a2a2); border: 1px solid #5f5f5f; color: #1b1b1b;
}
.tb {
  height: 12.500px; display: flex; align-items: center; justify-content: center; flex: none;
  background: linear-gradient(#969696, #7b7b7b); border: 1px solid #555; font-size: 6px; letter-spacing: -1px; color: #222;
}
.tb.lit { background: linear-gradient(#b5b5b5, #a5a5a5); }
.tb.endr { border-radius: 0 3px 3px 0; }
.stats { margin-left: 1px; color: #161616; white-space: nowrap; font-size: 6.600px; }

/* Corner hatches */
.corner {
  position: absolute; top: 0; right: 0; width: 10px; height: 10px;
  background: repeating-linear-gradient(45deg, #cfcfcf 0 1px, #3a3a3a 1px 2px);
  clip-path: polygon(0 0, 100% 0, 100% 100%);
  opacity: .7;
}

/* Workspace */
.workspace { flex: 1; display: flex; min-height: 0; }
.leftcol { width: 2168px; flex: none; display: flex; flex-direction: column; }
.rightcol { width: 332px; flex: none; border-left: 2px solid #3d3d3d; display: flex; flex-direction: column; }
.viewarea { height: 1187px; flex: none; display: flex; }
.toolregion { width: 104px; flex: none; display: flex; flex-direction: column; background: #747474; }
.toolupper { height: 1046px; flex: none; display: flex; }
.tabs {
  width: 12px; flex: none; display: flex; flex-direction: column; padding: 3px 0 0 2px;
  background: #4e4e4e radial-gradient(#5c5c5c .5px, transparent .8px) 0 0 / 3px 3px;
}
.tab {
  writing-mode: vertical-rl; transform: rotate(180deg);
  display: flex; align-items: center; justify-content: center;
  background: #6a6a6a; color: #111; border: 1px solid #555; border-left: 0;
  border-radius: 0 2px 2px 0; letter-spacing: .2px;
}
.tab-on { background: #747474; color: #111; }
.tab-tools { height: 28px; } .tab-create { height: 33px; } .tab-shade { height: 52px; } .tab-opt { height: 35px; } .tab-gp { height: 53px; }
.shelf { flex: 1; padding: 1px 6px 0 6.500px; font-size: 6.500px; }
.tpanel { border-bottom: 1px solid #5b5b5b; margin: 0 -2px; padding: 0 2px; }
.tp1 { padding-bottom: 4px; }
.tp2 { padding-bottom: 4.500px; }
.tp3 { padding-bottom: 4.300px; }
.tp4 { border-bottom: 0; }
.phead { height: 14px; display: flex; align-items: center; font-size: 7.400px; color: #1c1c1c; padding-left: 2.500px; }
.tdown { width: 0; height: 0; border: 3px solid transparent; border-top: 5px solid #1c1c1c; border-bottom: 0; margin-right: 2px; flex: none; }
.tright { width: 0; height: 0; border: 3px solid transparent; border-left: 5px solid #1c1c1c; border-right: 0; margin-right: 2px; flex: none; }
.grip { margin-left: auto; width: 8px; height: 4px; background: radial-gradient(#5b5b5b .6px, transparent .8px) 0 0 / 2px 2px; }
.lbl { height: 13px; display: flex; align-items: center; padding-left: 5px; color: #1c1c1c; }
.tp2 > .phead + .lbl { margin-top: 7px; }
.lbl-sp { margin-top: 3.500px; }
.tp1 .grp { margin-top: 7px; }
.tp4 > .phead + .grp { margin-top: 6.700px; }
.grp { display: flex; flex-direction: column; border-radius: 3px; overflow: hidden; }
.btn {
  height: 13px; flex: none; display: flex; align-items: center; padding: 0 3px 0 4px;
  background: radial-gradient(rgba(255,255,255,.13) .5px, transparent .8px) 0 0 / 3px 3px, linear-gradient(#a6a6a6, #8c8c8c);
  border: 1px solid #545454; border-top: 0;
  color: #161616; white-space: nowrap; overflow: hidden;
}
.grp > .btn:first-child, .grp > .hsplit:first-child > .btn { border-top: 1px solid #545454; }
.btn.dark { background: radial-gradient(rgba(255,255,255,.1) .5px, transparent .8px) 0 0 / 3px 3px, linear-gradient(#4a4a4a, #2f2f2f); color: #eee; border-color: #262626; }
.hsplit { display: flex; }
.hsplit > .btn { flex: 1 1 0; min-width: 0; padding-right: 0; }
.hsplit > .btn + .btn { border-left: 0; }
.weights { margin-top: 6.500px; display: flex; flex-direction: column; gap: 1.670px; }
.wbtn {
  height: 12.670px; display: flex; align-items: center; padding-left: 5px; border-radius: 3px;
  background: radial-gradient(rgba(255,255,255,.13) .5px, transparent .8px) 0 0 / 3px 3px, linear-gradient(#a6a6a6, #909090);
  border: 1px solid #505050; color: #161616;
}
.wbtn.off { background: radial-gradient(rgba(255,255,255,.08) .5px, transparent .8px) 0 0 / 3px 3px, linear-gradient(#8a8a8a, #7d7d7d); border-color: #656565; color: #585858; }
.oppanel { flex: 1; display: flex; align-items: flex-start; padding: 3px 0 0 9px; color: #1c1c1c; font-size: 7.300px; }

/* 3D viewport */
.viewport { position: relative; flex: 1; background: #393939; }
.vp-top { position: absolute; left: 12.500px; top: 8.500px; color: #e3e3e3; font-size: 6.500px; }
.vp-bottom { position: absolute; left: 44px; top: 1174px; color: #e3e3e3; }
.vp-plus { position: absolute; right: 0; top: 14px; width: 8px; height: 10px; background: #333; color: #aaa; display: flex; align-items: center; justify-content: center; font-size: 8px; }
.meshcanvas { position: absolute; inset: 0; width: 100%; height: 100%; }
.axes { fill: none; stroke: #505050; stroke-width: 1; }
.face { fill: #acacb8; stroke: #2d2d2d; stroke-width: 1.100; stroke-linejoin: round; }
.grid { fill: none; stroke: #5c5c5c; stroke-width: .85; }
.edges { fill: none; stroke: #3c3c3c; stroke-width: .95; }
.vdots { fill: none; stroke: #202020; stroke-width: 2; stroke-linecap: round; }
.cursor { fill: none; stroke: #2a2a2a; stroke-width: 1; }
.lampdot { fill: #1d1d1d; }
.lampring { fill: none; stroke: #333; stroke-width: .8; stroke-dasharray: 1.500 1.500; }
.wdot { fill: #eee; }
.camdot { fill: #ddd; stroke: #111; stroke-width: 1; }

/* 3D header + timeline */
.h3d { background: #747474; border-bottom: 1px solid #2e2e2e; height: 17px; }
.h3d .dd { font-size: 6.600px; }
.timeline {
  position: relative; height: 96px; flex: none;
  background:
    repeating-linear-gradient(90deg, transparent 0 19.200px, rgba(0,0,0,.17) 19.200px 20.200px, transparent 20.200px 31.680px),
    linear-gradient(90deg, #454545 0 371px, #2f2f2f 371px 373.500px, #747474 373.500px 1957px, #545454 1957px 1958px, #454545 1958px);
}
.timeline::before {
  content: ""; position: absolute; inset: 0;
  background: repeating-linear-gradient(90deg, transparent 0 3.400px, rgba(0,0,0,.22) 3.400px 4.400px, transparent 4.400px 31.680px);
  -webkit-mask-image: repeating-linear-gradient(#000 0 2px, transparent 2px 4px);
  mask-image: repeating-linear-gradient(#000 0 2px, transparent 2px 4px);
}
.ruler {
  height: 10px; flex: none; display: flex; align-items: center; padding-left: 3.860px;
  background: radial-gradient(#a5a5a5 .5px, transparent .8px) 0 0 / 3px 3px, linear-gradient(#969696, #808080);
  border-radius: 5px; color: #1e1e1e; overflow: hidden;
}
.ruler span { width: 31.680px; flex: none; text-align: center; }
.htl { height: 18px; padding-top: 1px; }

.nums { display: flex; flex-direction: column; border-radius: 7px; overflow: hidden; flex: none; }
.htl .nums { flex-direction: row; height: 13px; }
.num {
  height: 12.900px; flex: none; display: flex; align-items: center; padding: 0 3px;
  background: linear-gradient(#8d8d8d, #ababab); border: 1px solid #505050; border-top: 0; color: #151515; white-space: nowrap;
}
.nums > .num:first-child { border-top: 1px solid #505050; }
.htl .num { border-top: 1px solid #505050; height: 13px; }
.htl .num + .num { border-left: 0; }
.num span { margin-left: 5px; }
.num b { margin-left: auto; margin-right: 4px; }
.la { width: 0; height: 0; border: 2px solid transparent; border-right: 3px solid #555; border-left: 0; flex: none; }
.ra { width: 0; height: 0; border: 2px solid transparent; border-left: 3px solid #555; border-right: 0; flex: none; }
.slider { padding-right: 5px; }

/* Outliner */
.outliner { height: 246px; flex: none; display: flex; flex-direction: column; border-top: 1px solid #5a5a5a; }
.holin { height: 18px; padding-bottom: 2px; }
.searchbox { width: 71px; height: 12px; padding-left: 4px; font-size: 8px; display: flex; align-items: center; border-radius: 3px; border: 1px solid #5d5d5d; background: linear-gradient(#7f7f7f, #9b9b9b); color: #eee; }
.olbody {
  flex: 1; display: flex; min-height: 0;
  background: repeating-linear-gradient(#6e6e6e 0 13px, #747474 13px 26px);
}
.oltree { position: relative; flex: 1; }
.oline { position: absolute; left: 17px; top: 13px; width: 1px; height: 60px; background: #3f3f3f; }
.olrow { position: relative; height: 13px; display: flex; align-items: center; }
.d0 { padding-left: 2px; } .d1 { padding-left: 15px; } .d1b { padding-left: 18px; } .d1c { padding-left: 26px; } .d2 { padding-left: 28px; } .d3 { padding-left: 44px; }
.d0 .i11 { margin-left: 5px; }
.d1 .i11 { margin-left: 6px; }
.d1b .i11 { margin-left: 3px; }
.d2 .i11 { margin-left: 5px; }
.d3 .i11 { margin-left: 3px; }
.exp { width: 6px; height: 6px; border-radius: 50%; background: #c9c9c9; border: 1px solid #2c2c2c; flex: none; position: relative; }
.oln { margin-left: 2px; color: #161616; }
.oln.act { color: #e8e8e8; margin-left: 1px; }
.pipe { width: 1px; height: 9px; background: #2e2e2e; margin: 0 7px 0 8px; flex: none; }
.olrow .pipe + .i11 { margin-left: 0; }
.sel { background: #80868a; }
.olrestrict { width: 39px; flex: none; border-left: 1px solid #5f5f5f; background: linear-gradient(90deg, transparent 13px, #5f5f5f 13px 14px, transparent 14px 26px, #5f5f5f 26px 27px, transparent 27px); }
.rr { height: 13px; display: grid; grid-template-columns: 13px 13px 12px; align-items: center; justify-items: center; }

/* Properties */
.properties { flex: 1; display: flex; flex-direction: column; min-height: 0; border-top: 1px solid #2e2e2e; }
.hprops { height: 16px; }
.ptabs { display: flex; margin-left: 6px; border-radius: 3px; overflow: hidden; border: 1px solid #333; }
.ptab { width: 13px; height: 12px; background: linear-gradient(#585858, #404040); display: flex; align-items: center; justify-content: center; }
.ptab.on { background: linear-gradient(#a8a8a8, #9a9a9a); }
.pbody { flex: 1; padding: 0 6px 0 4px; background: #727272; }
.context { height: 24px; display: flex; align-items: center; gap: 4px; padding-left: 3px; border-bottom: 1px solid #5b5b5b; margin: 0 -2px; color: #151515; }
.context span { margin-left: -1px; }
.ppanel { border-bottom: 1px solid #5b5b5b; margin: 0 -2px; padding: 0 2px; }
.ppanel.last { border-bottom: 0; }
.closed { height: 15.670px; }
.pphead { height: 15px; display: flex; align-items: center; padding-left: 3px; font-size: 7.400px; color: #1c1c1c; }
.closed .pphead { height: 14.670px; }
.p-render { height: 56px; }
.p-dim { height: 147px; }
.p-aa { height: 53.300px; }
.p-output { height: 117px; }
.rowrender { margin-top: 6.700px; height: 12.500px; border-radius: 3px; overflow: hidden; }
.rowrender .btn { height: 12.500px; border-top: 1px solid #545454; }
.bimg { padding-left: 3px; }
.bimg span { flex: 1; text-align: center; padding-right: 10px; }
.rowdisplay { display: flex; align-items: center; margin-top: 3px; height: 13px; }
.rowdisplay .plabel { width: 109px; padding-left: 5px; }
.plabel { color: #1c1c1c; display: flex; align-items: center; padding-left: 5px; }
.h13 { height: 13px; }
.rowpresets { display: flex; margin-top: 6.700px; height: 12.500px; }
.cols { display: grid; grid-template-columns: 158px 156px; column-gap: 6px; }
.p-dim .cols { margin-top: 4px; }
.p-aa .cols { margin-top: 6.700px; }
.col { min-width: 0; }
.nums.col3 { width: 100%; }
.slider.s50 { background: linear-gradient(90deg, #777 0 81px, transparent 81px), linear-gradient(#b0b0b0, #a5a5a5); }
.borderrow { display: flex; height: 15px; align-items: center; }
.chk { display: flex; align-items: center; gap: 5px; color: #1c1c1c; padding-left: 3px; }
.borderrow .chk { width: 81px; }
.chk.dim { color: #575757; }
.chk.lite { color: #dcdcdc; }
.cb { width: 9px; height: 9px; border-radius: 2px; flex: none; background: linear-gradient(#4d4d4d, #5f5f5f); border: 1px solid #474747; display: flex; align-items: center; justify-content: center; }
.chk.dim .cb { background: #696969; border-color: #5c5c5c; }
.hcb { margin-right: 3px; margin-left: 1px; }
.oldnew { flex-direction: row; display: flex; }
.oldnew .num { flex: 1 1 0; min-width: 0; border-top: 1px solid #505050; }
.oldnew .num + .num { border-left: 0; }
.segs { display: flex; height: 12.500px; border-radius: 3px; overflow: hidden; }
.seg { flex: 1 1 0; display: flex; align-items: center; justify-content: center; color: #eee; background: linear-gradient(#484848, #303030); border: 1px solid #2b2b2b; border-left-width: 0; }
.seg:first-child { border-left-width: 1px; }
.seg.lit { background: linear-gradient(#8f9396, #a2a5a7); color: #141414; border-color: #555; }
.chk-fs { height: 15px; margin-top: 1px; }
.sizef { margin-top: 2px; }
.sizef .num { height: 12.500px; border-top: 1px solid #505050; }
.rowpath { display: flex; margin-top: 6px; height: 12.600px; }
.pathfield { flex: 1; display: flex; align-items: center; padding-left: 5px; border: 1px solid #555; border-right: 0; border-radius: 3px 0 0 3px; background: linear-gradient(#8f8f8f, #adadad); color: #141414; }
.outchecks { grid-auto-rows: 14.300px; align-items: center; margin-top: 3.200px; }
.rowpng { margin-top: 2.200px; }
.rowpng .dd { padding-left: 2px; gap: 3px; }
.rowdepth { display: flex; align-items: center; margin-top: 2.300px; height: 12px; }
.rowdepth .plabel { width: 110px; }
.depth { flex: 1; height: 12px; }
.compression {
  margin-top: 2px; height: 12.400px; display: flex; align-items: center; justify-content: space-between; padding: 0 8px 0 10px;
  border: 1px solid #555; border-radius: 6px; color: #141414;
  background: linear-gradient(90deg, #737373 0 53px, #aaaaaa 53px);
}
```
